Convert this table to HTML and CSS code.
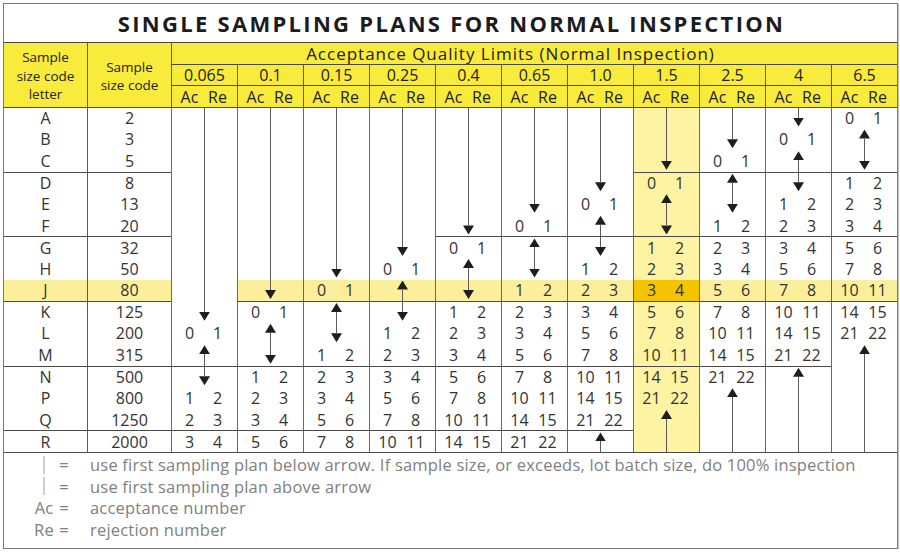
FILE: index.html
```html
<!DOCTYPE html>
<html lang="en">
<head>
<meta charset="utf-8">
<title>Single Sampling Plans for Normal Inspection</title>
<link rel="stylesheet" href="styles.css">
</head>
<body>
<div class="sheet">
  <h1 class="title">SINGLE SAMPLING PLANS FOR NORMAL INSPECTION</h1>
  <div class="plan">
    <div class="h h-code">Sample<br>size code<br>letter</div>
    <div class="h h-code bl">Sample<br>size code</div>
    <div class="h h-aql bl">Acceptance Quality Limits (Normal Inspection)</div>

    <div class="h bl">0.065</div><div class="h bl">0.1</div><div class="h bl">0.15</div><div class="h bl">0.25</div><div class="h bl">0.4</div><div class="h bl">0.65</div><div class="h bl">1.0</div><div class="h bl">1.5</div><div class="h bl">2.5</div><div class="h bl">4</div><div class="h bl">6.5</div>

    <div class="h bl acre"><span>Ac</span><span>Re</span></div><div class="h bl acre"><span>Ac</span><span>Re</span></div><div class="h bl acre"><span>Ac</span><span>Re</span></div><div class="h bl acre"><span>Ac</span><span>Re</span></div><div class="h bl acre"><span>Ac</span><span>Re</span></div><div class="h bl acre"><span>Ac</span><span>Re</span></div><div class="h bl acre"><span>Ac</span><span>Re</span></div><div class="h bl acre"><span>Ac</span><span>Re</span></div><div class="h bl acre"><span>Ac</span><span>Re</span></div><div class="h bl acre"><span>Ac</span><span>Re</span></div><div class="h bl acre"><span>Ac</span><span>Re</span></div>

    <!-- A -->
    <div class="c t">A</div><div class="c bl t">2</div>
    <div class="q t s"></div><div class="q t s"></div><div class="q t s"></div><div class="q t s"></div><div class="q t s"></div><div class="q t s"></div><div class="q t s"></div><div class="q t s hl"></div><div class="q t s"></div><div class="q t d"><i></i><b></b></div><div class="q t v"><span>0</span><span>1</span></div>
    <!-- B -->
    <div class="c">B</div><div class="c bl">3</div>
    <div class="q s"></div><div class="q s"></div><div class="q s"></div><div class="q s"></div><div class="q s"></div><div class="q s"></div><div class="q s"></div><div class="q s hl"></div><div class="q d"><i></i><b></b></div><div class="q v"><span>0</span><span>1</span></div><div class="q u"><b></b><i></i></div>
    <!-- C -->
    <div class="c">C</div><div class="c bl">5</div>
    <div class="q s"></div><div class="q s"></div><div class="q s"></div><div class="q s"></div><div class="q s"></div><div class="q s"></div><div class="q s"></div><div class="q d hl"><i></i><b></b></div><div class="q v"><span>0</span><span>1</span></div><div class="q u"><b></b><i></i></div><div class="q d"><i></i><b></b></div>
    <!-- D -->
    <div class="c t">D</div><div class="c bl t">8</div>
    <div class="q s"></div><div class="q s"></div><div class="q s"></div><div class="q s"></div><div class="q s"></div><div class="q s"></div><div class="q d"><i></i><b></b></div><div class="q t v hl"><span>0</span><span>1</span></div><div class="q t u"><b></b><i></i></div><div class="q t d"><i></i><b></b></div><div class="q t v"><span>1</span><span>2</span></div>
    <!-- E -->
    <div class="c">E</div><div class="c bl">13</div>
    <div class="q s"></div><div class="q s"></div><div class="q s"></div><div class="q s"></div><div class="q s"></div><div class="q d"><i></i><b></b></div><div class="q v"><span>0</span><span>1</span></div><div class="q u hl"><b></b><i></i></div><div class="q d"><i></i><b></b></div><div class="q v"><span>1</span><span>2</span></div><div class="q v"><span>2</span><span>3</span></div>
    <!-- F -->
    <div class="c">F</div><div class="c bl">20</div>
    <div class="q s"></div><div class="q s"></div><div class="q s"></div><div class="q s"></div><div class="q d"><i></i><b></b></div><div class="q v"><span>0</span><span>1</span></div><div class="q u"><b></b><i></i></div><div class="q d hl"><i></i><b></b></div><div class="q v"><span>1</span><span>2</span></div><div class="q v"><span>2</span><span>3</span></div><div class="q v"><span>3</span><span>4</span></div>
    <!-- G -->
    <div class="c t">G</div><div class="c bl t">32</div>
    <div class="q s"></div><div class="q s"></div><div class="q s"></div><div class="q d"><i></i><b></b></div><div class="q t v"><span>0</span><span>1</span></div><div class="q t u"><b></b><i></i></div><div class="q t d"><i></i><b></b></div><div class="q t v hl"><span>1</span><span>2</span></div><div class="q t v"><span>2</span><span>3</span></div><div class="q t v"><span>3</span><span>4</span></div><div class="q t v"><span>5</span><span>6</span></div>
    <!-- H -->
    <div class="c">H</div><div class="c bl">50</div>
    <div class="q s"></div><div class="q s"></div><div class="q d"><i></i><b></b></div><div class="q v"><span>0</span><span>1</span></div><div class="q u"><b></b><i></i></div><div class="q d"><i></i><b></b></div><div class="q v"><span>1</span><span>2</span></div><div class="q v hl"><span>2</span><span>3</span></div><div class="q v"><span>3</span><span>4</span></div><div class="q v"><span>5</span><span>6</span></div><div class="q v"><span>7</span><span>8</span></div>
    <!-- J -->
    <div class="c jr">J</div><div class="c bl jr">80</div>
    <div class="q s"></div><div class="q d jr"><i></i><b></b></div><div class="q v jr"><span>0</span><span>1</span></div><div class="q u jr"><b></b><i></i></div><div class="q d jr"><i></i><b></b></div><div class="q v jr"><span>1</span><span>2</span></div><div class="q v jr"><span>2</span><span>3</span></div><div class="q v hx"><span>3</span><span>4</span></div><div class="q v jr"><span>5</span><span>6</span></div><div class="q v jr"><span>7</span><span>8</span></div><div class="q v jr"><span>10</span><span>11</span></div>
    <!-- K -->
    <div class="c t">K</div><div class="c bl t">125</div>
    <div class="q d"><i></i><b></b></div><div class="q t v"><span>0</span><span>1</span></div><div class="q t u"><b></b><i></i></div><div class="q t d"><i></i><b></b></div><div class="q t v"><span>1</span><span>2</span></div><div class="q t v"><span>2</span><span>3</span></div><div class="q t v"><span>3</span><span>4</span></div><div class="q t v hl"><span>5</span><span>6</span></div><div class="q t v"><span>7</span><span>8</span></div><div class="q t v"><span>10</span><span>11</span></div><div class="q t v"><span>14</span><span>15</span></div>
    <!-- L -->
    <div class="c">L</div><div class="c bl">200</div>
    <div class="q v"><span>0</span><span>1</span></div><div class="q u"><b></b><i></i></div><div class="q d"><i></i><b></b></div><div class="q v"><span>1</span><span>2</span></div><div class="q v"><span>2</span><span>3</span></div><div class="q v"><span>3</span><span>4</span></div><div class="q v"><span>5</span><span>6</span></div><div class="q v hl"><span>7</span><span>8</span></div><div class="q v"><span>10</span><span>11</span></div><div class="q v"><span>14</span><span>15</span></div><div class="q v"><span>21</span><span>22</span></div>
    <!-- M -->
    <div class="c">M</div><div class="c bl">315</div>
    <div class="q u"><b></b><i></i></div><div class="q d"><i></i><b></b></div><div class="q v"><span>1</span><span>2</span></div><div class="q v"><span>2</span><span>3</span></div><div class="q v"><span>3</span><span>4</span></div><div class="q v"><span>5</span><span>6</span></div><div class="q v"><span>7</span><span>8</span></div><div class="q v hl"><span>10</span><span>11</span></div><div class="q v"><span>14</span><span>15</span></div><div class="q v"><span>21</span><span>22</span></div><div class="q u"><b></b><i></i></div>
    <!-- N -->
    <div class="c t">N</div><div class="c bl t">500</div>
    <div class="q t d"><i></i><b></b></div><div class="q t v"><span>1</span><span>2</span></div><div class="q t v"><span>2</span><span>3</span></div><div class="q t v"><span>3</span><span>4</span></div><div class="q t v"><span>5</span><span>6</span></div><div class="q t v"><span>7</span><span>8</span></div><div class="q t v"><span>10</span><span>11</span></div><div class="q t v hl"><span>14</span><span>15</span></div><div class="q t v"><span>21</span><span>22</span></div><div class="q t u"><b></b><i></i></div><div class="q s"></div>
    <!-- P -->
    <div class="c">P</div><div class="c bl">800</div>
    <div class="q v"><span>1</span><span>2</span></div><div class="q v"><span>2</span><span>3</span></div><div class="q v"><span>3</span><span>4</span></div><div class="q v"><span>5</span><span>6</span></div><div class="q v"><span>7</span><span>8</span></div><div class="q v"><span>10</span><span>11</span></div><div class="q v"><span>14</span><span>15</span></div><div class="q v hl"><span>21</span><span>22</span></div><div class="q u"><b></b><i></i></div><div class="q s"></div><div class="q s"></div>
    <!-- Q -->
    <div class="c">Q</div><div class="c bl">1250</div>
    <div class="q v"><span>2</span><span>3</span></div><div class="q v"><span>3</span><span>4</span></div><div class="q v"><span>5</span><span>6</span></div><div class="q v"><span>7</span><span>8</span></div><div class="q v"><span>10</span><span>11</span></div><div class="q v"><span>14</span><span>15</span></div><div class="q v"><span>21</span><span>22</span></div><div class="q u hl"><b></b><i></i></div><div class="q s"></div><div class="q s"></div><div class="q s"></div>
    <!-- R -->
    <div class="c t">R</div><div class="c bl t">2000</div>
    <div class="q t v"><span>3</span><span>4</span></div><div class="q t v"><span>5</span><span>6</span></div><div class="q t v"><span>7</span><span>8</span></div><div class="q t v"><span>10</span><span>11</span></div><div class="q t v"><span>14</span><span>15</span></div><div class="q t v"><span>21</span><span>22</span></div><div class="q t u"><b></b><i></i></div><div class="q s hl"></div><div class="q s"></div><div class="q s"></div><div class="q s"></div>
  </div>
  <div class="legend">
    <div class="lg-row"><span class="lg-key"><span class="lg-sym"><i class="lg-bar"></i></span><span class="lg-eq">=</span></span><span>use first sampling plan below arrow. If sample size, or exceeds, lot batch size, do 100% inspection</span></div>
    <div class="lg-row"><span class="lg-key"><span class="lg-sym"><i class="lg-bar"></i></span><span class="lg-eq">=</span></span><span>use first sampling plan above arrow</span></div>
    <div class="lg-row"><span class="lg-key"><span class="lg-sym">Ac</span><span class="lg-eq">=</span></span><span>acceptance number</span></div>
    <div class="lg-row"><span class="lg-key"><span class="lg-sym">Re</span><span class="lg-eq">=</span></span><span>rejection number</span></div>
  </div>
</div>
</body>
</html>
```
FILE: styles.css
```css
* { box-sizing: border-box; }

body {
  margin: 0;
  background: #ffffff;
  font-family: "Open Sans", "DejaVu Sans", sans-serif;
  color: #333333;
}

.sheet {
  margin: 3px 0 0 3px;
  width: 895px;
  border: 1px solid #7a7a7a;
  box-shadow: 1px 1px 0 #c4c4c4;
  background: #ffffff;
}

.title {
  margin: 0;
  height: 38px;
  display: flex;
  align-items: center;
  justify-content: center;
  padding-left: 2px;
  font-size: 22px;
  font-weight: 700;
  letter-spacing: 2.3px;
  color: #1c1c1c;
}

.plan {
  display: grid;
  grid-template-columns: 83px 84px repeat(11, 66px);
  grid-template-rows: 22px 21px 22px repeat(16, 21.5625px);
  font-size: 16px;
}

.h {
  background: #f9eb3b;
  border-top: 1px solid #4a4a3a;
  display: flex;
  align-items: center;
  justify-content: center;
  color: #222222;
  line-height: 1;
}

.h-code {
  grid-row: span 3;
  flex-direction: column;
  text-align: center;
  font-size: 13.5px;
  line-height: 18.5px;
  padding-top: 2px;
}

.h-aql {
  grid-column: span 11;
  padding-right: 48px;
  font-size: 17px;
  letter-spacing: 1px;
}

.bl { border-left: 1px solid #5a5a5a; }
.t { border-top: 1px solid #4a4a4a; }

.acre span,
.v span {
  width: 28px;
  text-align: center;
}

.acre { padding-right: 2px; }

.c {
  display: flex;
  align-items: center;
  justify-content: center;
  color: #333333;
}

.q {
  border-left: 1px solid #6a6a6a;
}

.v {
  display: flex;
  align-items: center;
  justify-content: center;
  padding-right: 2px;
  color: #333333;
}

.s {
  background-image: linear-gradient(#5c5c5c, #5c5c5c);
  background-repeat: no-repeat;
  background-position: center top;
  background-size: 1px 100%;
}

.d,
.u {
  display: flex;
  flex-direction: column;
  align-items: center;
}

.d { padding-bottom: 2px; }
.u { padding-top: 1px; }

.d i,
.u i {
  flex: 1;
  width: 1px;
  background: #5c5c5c;
}

.d b,
.u b {
  width: 11px;
  height: 9px;
  flex: none;
  background: #1e1e1e;
}

.d b { clip-path: polygon(0 0, 100% 0, 50% 100%); }
.u b { clip-path: polygon(50% 0, 100% 100%, 0 100%); }

.hl { background-color: #fdf3a3; }
.jr { background-color: #fbef9b; }
.hx { background-color: #f5c400; }

.legend {
  height: 96px;
  border-top: 1px solid #4a4a4a;
  padding-top: 1px;
  color: #808080;
  font-size: 16.5px;
  letter-spacing: 0.2px;
  line-height: 21.5px;
}

.lg-row {
  display: grid;
  grid-template-columns: 67px 1fr;
  column-gap: 19px;
}

.lg-key {
  display: flex;
  justify-content: flex-end;
  align-items: center;
  gap: 4px;
}

.lg-sym {
  width: 18px;
  display: flex;
  justify-content: center;
  align-items: center;
}

.lg-bar {
  display: block;
  width: 2px;
  height: 18px;
  background: #cfcfcf;
}

.lg-eq {
  width: 14px;
  text-align: center;
}
```
